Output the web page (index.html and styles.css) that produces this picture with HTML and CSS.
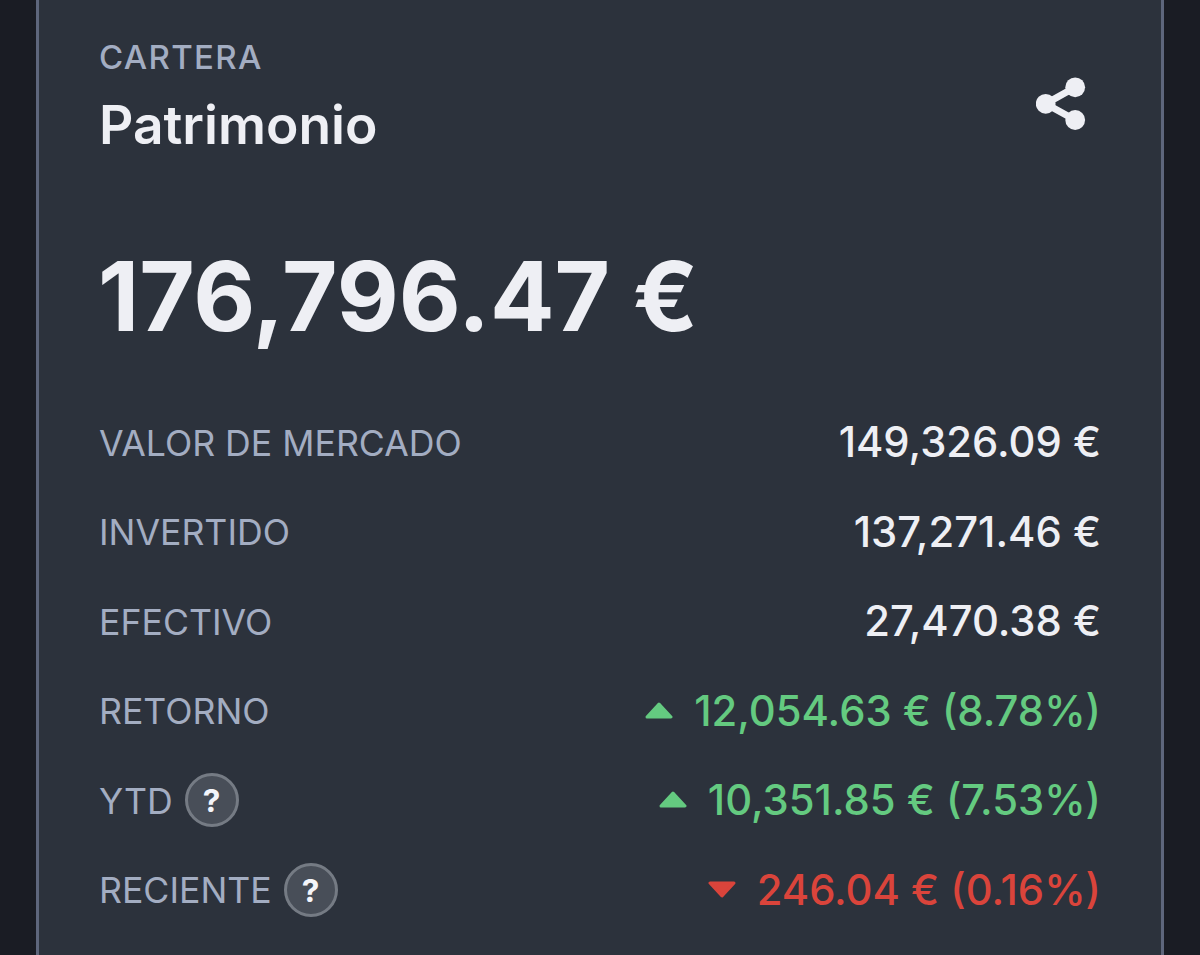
FILE: index.html
```
<!DOCTYPE html>
<html lang="es">
<head>
    <meta charset="UTF-8">
    <meta name="viewport" content="width=device-width, initial-scale=1.0">
    <title>Patrimonio</title>
    <link rel="stylesheet" href="styles.css">
</head>
<body>
    <div class="card">
        <div class="card-header">
            <div class="titles">
                <div class="pretitle">CARTERA</div>
                <h1>Patrimonio</h1>
            </div>
            <button type="button" class="share-btn" aria-label="Compartir">
                <svg viewBox="0 0 50 54" width="50" height="54">
                    <path d="M39.2 10.3 L9.7 26.8 L39.2 43" fill="none" stroke="currentColor" stroke-width="7"/>
                    <circle cx="39.2" cy="10.3" r="9.9"/>
                    <circle cx="9.7" cy="26.8" r="9.9"/>
                    <circle cx="39.2" cy="43" r="9.9"/>
                </svg>
            </button>
        </div>

        <div class="total">176,796.47 €</div>

        <div class="stats">
            <div class="row">
                <span class="label">VALOR DE MERCADO</span>
                <span class="value">149,326.09 €</span>
            </div>
            <div class="row">
                <span class="label">INVERTIDO</span>
                <span class="value">137,271.46 €</span>
            </div>
            <div class="row">
                <span class="label">EFECTIVO</span>
                <span class="value">27,470.38 €</span>
            </div>
            <div class="row">
                <span class="label">RETORNO</span>
                <span class="value up"><svg class="caret" viewBox="0 0 28 17"><path d="M14 2 L26 15 H2 Z"/></svg>12,054.63 € (8.78%)</span>
            </div>
            <div class="row">
                <span class="label">YTD</span>
                <span class="help">?</span>
                <span class="value up"><svg class="caret" viewBox="0 0 28 17"><path d="M14 2 L26 15 H2 Z"/></svg>10,351.85 € (7.53%)</span>
            </div>
            <div class="row">
                <span class="label">RECIENTE</span>
                <span class="help">?</span>
                <span class="value down"><svg class="caret" viewBox="0 0 28 17"><path d="M2 2 H26 L14 15 Z"/></svg>246.04 € (0.16%)</span>
            </div>
        </div>
    </div>
</body>
</html>
```
FILE: styles.css
```
body {
    font-family: Inter, sans-serif;
    background-color: #1a1c24;
    margin: 0;
    height: 955px;
    overflow: hidden;
}

.card {
    box-sizing: border-box;
    height: 955px;
    margin: 0 36px;
    padding: 37px 60px 0 59px;
    background-color: #2c323c;
    border-left: 3px solid #5e667c;
    border-right: 3px solid #5e667c;
}

.card-header {
    display: flex;
    justify-content: space-between;
    height: 120px;
}

.pretitle {
    color: #a3adc2;
    font-size: 33px;
    font-weight: 500;
    line-height: 40px;
    letter-spacing: 1.3px;
    padding-left: 1px;
}

h1 {
    color: #eeeff4;
    font-size: 53.3px;
    font-weight: 600;
    line-height: 64px;
    margin: 16px 0 0 1px;
}

.share-btn {
    background: none;
    border: none;
    padding: 0;
    margin: 40px 15px 0 0;
    height: 54px;
    color: #eeeff4;
}

.share-btn svg {
    display: block;
    fill: currentColor;
}

.total {
    color: #eeeff4;
    font-size: 95.6px;
    font-weight: 700;
    line-height: 120px;
    margin-top: 79px;
}

.stats {
    margin-top: 42px;
}

.row {
    display: flex;
    align-items: center;
    height: 89.5px;
}

.label {
    color: #a3adc2;
    font-size: 35.65px;
    padding-left: 1px;
}

.help {
    box-sizing: border-box;
    width: 54px;
    height: 54px;
    margin-left: 12px;
    margin-bottom: 1px;
    border: 3px solid #757b84;
    border-radius: 50%;
    background-color: #484e58;
    color: #f4f5fa;
    font-size: 31.5px;
    font-weight: 700;
    line-height: 49px;
    text-align: center;
}

.value {
    display: flex;
    align-items: center;
    margin-left: auto;
    padding-bottom: 1px;
    color: #eeeff4;
    font-size: 41.75px;
    font-weight: 500;
    white-space: pre;
}

.caret {
    width: 28px;
    height: 17px;
    margin-right: 21px;
    margin-bottom: 1px;
    fill: currentColor;
    stroke: currentColor;
    stroke-width: 3;
    stroke-linejoin: round;
}

.up {
    color: #64ca80;
}

.down {
    color: #da443b;
}
```
